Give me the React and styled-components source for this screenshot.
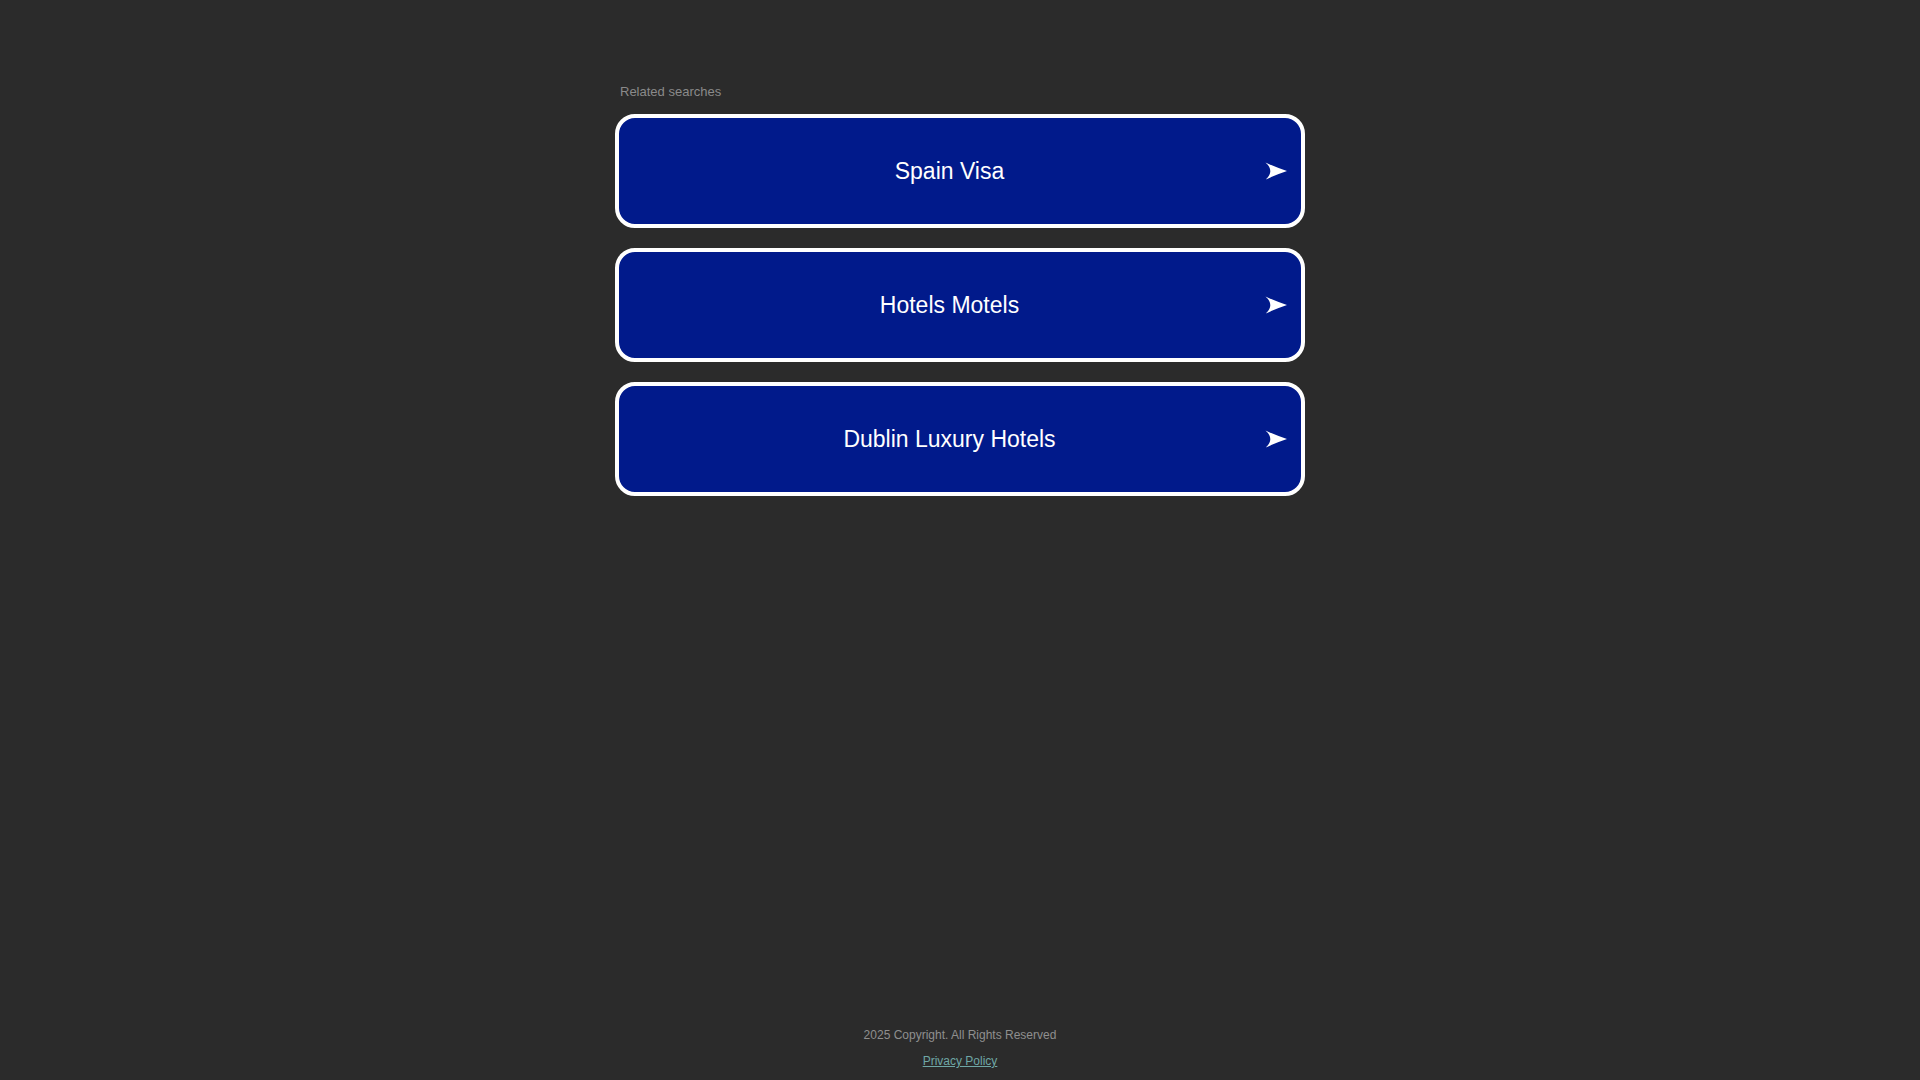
import React from "react";
import styled, { createGlobalStyle } from "styled-components";

const GlobalStyle = createGlobalStyle`
  html, body {
    margin: 0;
    padding: 0;
    background: #2b2b2b;
    font-family: "Liberation Sans", Arial, sans-serif;
  }
`;

const Page = styled.div`
  min-height: 100vh;
  display: flex;
  flex-direction: column;
  align-items: center;
  box-sizing: border-box;
`;

const Main = styled.main`
  width: 690px;
  padding-top: 83px;
  display: flex;
  flex-direction: column;
`;

const Heading = styled.div`
  font-size: 13px;
  line-height: 17px;
  color: #8a8a8a;
  padding-left: 5px;
  margin-bottom: 14px;
`;

const List = styled.div`
  display: flex;
  flex-direction: column;
  gap: 20px;
`;

const Item = styled.a`
  box-sizing: border-box;
  height: 114px;
  display: flex;
  align-items: center;
  padding: 0 14px 0 15px;
  background: #011a8b;
  border: 4px solid #ffffff;
  border-radius: 20px;
  color: #ffffff;
  text-decoration: none;
  cursor: pointer;
`;

const Label = styled.span`
  flex: 1;
  text-align: center;
  font-size: 23px;
  line-height: 28px;
`;

const Arrow = styled.svg`
  width: 22px;
  height: 18px;
  flex: none;
  display: block;
`;

const Footer = styled.footer`
  margin-top: auto;
  padding-bottom: 11px;
  display: flex;
  flex-direction: column;
  align-items: center;
  gap: 10px;
  font-size: 12px;
  line-height: 16px;
`;

const Copy = styled.div`
  color: #8f8f8f;
`;

const Privacy = styled.a`
  color: #6fa7a6;
  text-decoration: underline;
`;

const items = ["Spain Visa", "Hotels Motels", "Dublin Luxury Hotels"];

const ArrowIcon = () => (
  <Arrow viewBox="0 0 22 18">
    <path
      d="M0.5 0.5 Q10 5 22 9 Q10 13 0.8 17.6 Q5.5 13.5 5.3 9 Q5.1 4.5 0.5 0.5 Z"
      fill="#ffffff"
    />
  </Arrow>
);

export default function App() {
  return (
    <>
      <GlobalStyle />
      <Page>
        <Main>
          <Heading>Related searches</Heading>
          <List>
            {items.map((t) => (
              <Item key={t}>
                <Label>{t}</Label>
                <ArrowIcon />
              </Item>
            ))}
          </List>
        </Main>
        <Footer>
          <Copy>2025 Copyright. All Rights Reserved</Copy>
          <Privacy href="#">Privacy Policy</Privacy>
        </Footer>
      </Page>
    </>
  );
}
